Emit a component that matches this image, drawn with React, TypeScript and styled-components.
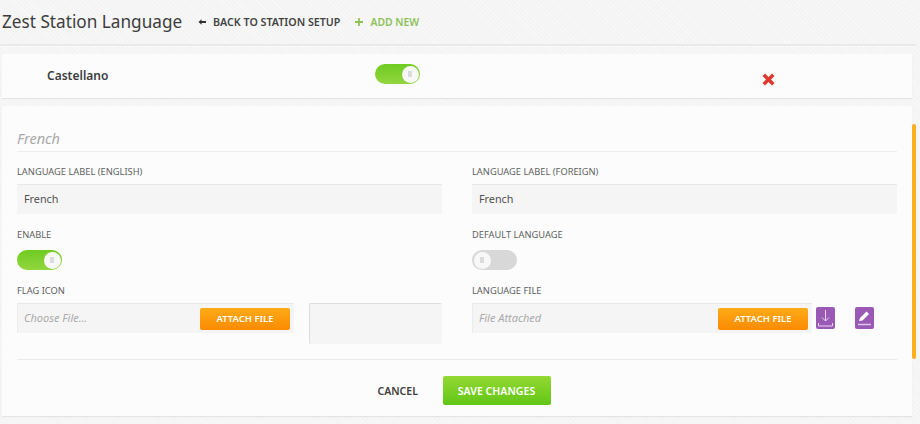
import React from "react";
import styled, { createGlobalStyle } from "styled-components";

const Global = createGlobalStyle`
  html, body { margin: 0; padding: 0; width: 920px; height: 424px; overflow: hidden; }
  body {
    font-family: "Noto Sans", "Open Sans", sans-serif;
    background-color: #f4f4f4;
    background-image: repeating-linear-gradient(45deg, rgba(255,255,255,.35) 0 1px, transparent 1px 3px);
    color: #444;
  }
  * { box-sizing: border-box; }
`;

const Page = styled.div`
  position: relative;
  width: 920px;
  height: 424px;
`;

const Header = styled.header`
  height: 46px;
  padding: 0 2px;
  margin-right: 4px;
  display: flex;
  align-items: center;
  border-bottom: 2px solid #e9e9e9;
  box-shadow: 0 1px 0 #fafafa;
`;

const Title = styled.h1`
  width: 180px;
  margin: 0 16px 2px 0;
  font-size: 17.2px;
  font-weight: 400;
  color: #3d3d3d;
  white-space: nowrap;
`;

const HeaderLink = styled.a<{ $green?: boolean }>`
  display: flex;
  align-items: center;
  gap: 7px;
  margin-right: 15px;
  font-size: ${(p) => (p.$green ? "10.4px" : "10.7px")};
  font-weight: 600;
  white-space: nowrap;
  color: ${(p) => (p.$green ? "#8fc15a" : "#444")};
`;

const Card = styled.section`
  margin: 0 8px 0 2px;
  background: #fcfcfc;
  box-shadow: 0 1px 1px #e4e4e4;
`;

const ListRow = styled(Card)`
  height: 44px;
  margin-top: 8px;
  margin-bottom: 8px;
  display: grid;
  grid-template-columns: 328px 387px 1fr;
  align-items: center;
  padding-left: 45px;
`;

const LangName = styled.div`
  font-size: 12px;
  font-weight: 600;
  color: #3c3c3c;
  margin-bottom: 2px;
`;

const Track = styled.div<{ $on?: boolean }>`
  width: 45px;
  height: 20px;
  border-radius: 10px;
  padding: 1.500px;
  display: flex;
  justify-content: ${(p) => (p.$on ? "flex-end" : "flex-start")};
  background: ${(p) => (p.$on ? "linear-gradient(#6fcb22, #92d63e)" : "#d8d8d8")};
`;

const Knob = styled.div`
  width: 17px;
  height: 17px;
  border-radius: 50%;
  background: #f8f8f8;
  display: flex;
  align-items: center;
  justify-content: center;
  &::after {
    content: "";
    width: 4px;
    height: 6px;
    background: #dcdcdc;
  }
`;

const ToggleSlot = styled.div<{ $offset: number }>`
  margin-top: ${(p) => p.$offset}px;
`;

const Toggle = ({ on }: { on?: boolean }) => (
  <Track $on={on}>
    <Knob />
  </Track>
);

const RemoveIcon = styled.svg`
  display: block;
  margin-top: 7px;
`;

const FormCard = styled(Card)`
  height: 310px;
  padding: 24px 15px 0;
`;

const Heading = styled.h2`
  margin: 0;
  height: 22px;
  font-size: 14.5px;
  line-height: 17px;
  font-style: italic;
  font-weight: 400;
  color: #a8a8a8;
  border-bottom: 1px solid #eeeeee;
`;

const Columns = styled.div`
  display: grid;
  grid-template-columns: 425px 425px;
  column-gap: 30px;
  padding-top: 13px;
`;

const Field = styled.div`
  height: 63px;
`;

const ToggleField = styled.div`
  height: 56px;
`;

const Label = styled.label`
  display: block;
  height: 19px;
  font-size: 9.3px;
  line-height: 14px;
  color: #5f5f5f;
  text-transform: uppercase;
  white-space: nowrap;
`;

const TextBox = styled.div`
  height: 30px;
  padding: 0 7px 2px;
  display: flex;
  align-items: center;
  font-size: 10.8px;
  color: #505050;
  background: #f5f5f5;
  border-top: 1px solid #e8e8e8;
`;

const FileRow = styled.div`
  display: flex;
  align-items: flex-start;
`;

const FileBox = styled.div<{ $width: number }>`
  width: ${(p) => p.$width}px;
  flex: none;
  height: 30px;
  padding: 0 4px 0 6px;
  display: flex;
  align-items: center;
  justify-content: space-between;
  background: #f5f5f5;
  border-top: 1px solid #e8e8e8;
  border-left: 1px solid #ececec;
`;

const FileHint = styled.span`
  margin-bottom: 2px;
  font-size: 11px;
  font-style: italic;
  color: #aaa;
`;

const AttachButton = styled.button`
  width: 90px;
  height: 22px;
  padding: 0;
  border: 0;
  border-radius: 2px;
  font: 600 9.5px "Noto Sans", sans-serif;
  color: #fff;
  background: linear-gradient(#fdab16, #fb8a02);
`;

const Preview = styled.div`
  width: 133px;
  height: 41px;
  margin-left: 15px;
  background: #f5f5f5;
  border-top: 1px solid #dedede;
  border-left: 1px solid #dedede;
  border-radius: 2px;
`;

const IconButton = styled.div<{ $gap: number }>`
  width: 19px;
  height: 22px;
  margin-left: ${(p) => p.$gap}px;
  margin-top: 4px;
  border-radius: 2px;
  background: #9a59b5;
  display: flex;
  align-items: center;
  justify-content: center;
  flex: none;
`;

const Footer = styled.div`
  margin-top: 15px;
  height: 46px;
  padding: 16px 0 0 14px;
  border-top: 1px solid #eaeaea;
  display: flex;
  justify-content: center;
  align-items: flex-start;
`;

const CancelButton = styled.button`
  width: 65px;
  height: 29px;
  padding: 0 25px 0 0;
  border: 0;
  background: none;
  font: 600 10.5px "Noto Sans", sans-serif;
  color: #3c3c3c;
  text-align: right;
`;

const SaveButton = styled.button`
  width: 108px;
  height: 29px;
  padding: 0;
  border: 0;
  border-radius: 2px;
  font: 600 10.6px "Noto Sans", sans-serif;
  color: #fff;
  background: linear-gradient(#93d833, #62c616);
`;

const ScrollThumb = styled.div`
  position: absolute;
  left: 912px;
  top: 124px;
  width: 4px;
  height: 235px;
  border-radius: 2px;
  background: #fdb01f;
`;

export default function App() {
  return (
    <Page>
      <Global />
      <Header>
        <Title>Zest Station Language</Title>
        <HeaderLink>
          <svg width="8" height="8" viewBox="0 0 9 8">
            <path d="M0.500 4 L4 1 V3 H9 V5 H4 V7 Z" fill="#333" />
          </svg>
          BACK TO STATION SETUP
        </HeaderLink>
        <HeaderLink $green>
          <svg width="8" height="8" viewBox="0 0 9 9">
            <path d="M3.500 0h2v3.500H9v2H5.500V9h-2V5.500H0v-2h3.500z" fill="#8fc15a" />
          </svg>
          ADD NEW
        </HeaderLink>
      </Header>

      <ListRow>
        <LangName>Castellano</LangName>
        <ToggleSlot $offset={-4}>
          <Toggle on />
        </ToggleSlot>
        <RemoveIcon width="13" height="13" viewBox="0 0 13 13">
          <path d="M3 0.500 L6.500 4 L10 0.500 L12.500 3 L9 6.500 L12.500 10 L10 12.500 L6.500 9 L3 12.500 L0.500 10 L4 6.500 L0.500 3 Z" fill="#dc3a30" />
        </RemoveIcon>
      </ListRow>

      <FormCard>
        <Heading>French</Heading>
        <Columns>
          <Field>
            <Label>Language label (English)</Label>
            <TextBox>French</TextBox>
          </Field>
          <Field>
            <Label>Language label (Foreign)</Label>
            <TextBox>French</TextBox>
          </Field>
          <ToggleField>
            <Label>Enable</Label>
            <ToggleSlot $offset={3}>
              <Toggle on />
            </ToggleSlot>
          </ToggleField>
          <ToggleField>
            <Label>Default language</Label>
            <ToggleSlot $offset={3}>
              <Toggle />
            </ToggleSlot>
          </ToggleField>
          <div>
            <Label>Flag icon</Label>
            <FileRow>
              <FileBox $width={277}>
                <FileHint>Choose File...</FileHint>
                <AttachButton>ATTACH FILE</AttachButton>
              </FileBox>
              <Preview />
            </FileRow>
          </div>
          <div>
            <Label>Language file</Label>
            <FileRow>
              <FileBox $width={340}>
                <FileHint>File Attached</FileHint>
                <AttachButton>ATTACH FILE</AttachButton>
              </FileBox>
              <IconButton $gap={4}>
                <svg width="17" height="20" viewBox="0 0 17 20" fill="none" stroke="#e6d6ee" strokeWidth="1">
                  <path d="M8.500 2 V13 M5 9.500 L8.500 13 L12 9.500 M1.500 15 V18 H15.500 V15" />
                </svg>
              </IconButton>
              <IconButton $gap={20}>
                <svg width="17" height="20" viewBox="0 0 17 20">
                  <path d="M3 13 L4 10 L10.500 3.500 L13 6 L6.500 12.500 Z" fill="#fff" />
                  <path d="M2 16.500 H15" stroke="#d9c5e4" strokeWidth="1.500" />
                </svg>
              </IconButton>
            </FileRow>
          </div>
        </Columns>
        <Footer>
          <CancelButton>CANCEL</CancelButton>
          <SaveButton>SAVE CHANGES</SaveButton>
        </Footer>
      </FormCard>
      <ScrollThumb />
    </Page>
  );
}
